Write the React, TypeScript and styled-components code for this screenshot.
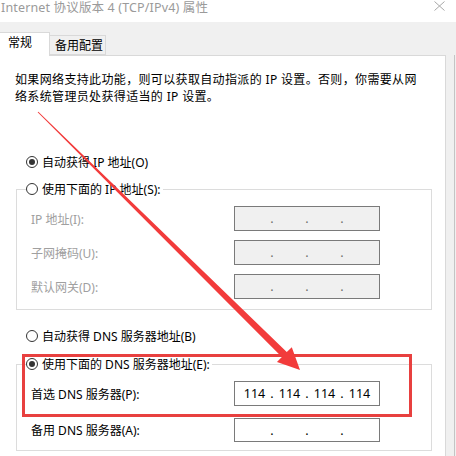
import React from "react"
import styled, { createGlobalStyle } from "styled-components"

const GlobalStyle = createGlobalStyle`
  html, body {
    margin: 0;
    padding: 0;
    background: #ffffff;
  }
  body {
    font-family: "Noto Sans", "Noto Sans CJK SC", sans-serif;
    font-size: 12px;
    color: #000;
  }
`

const Window = styled.div`
  position: relative;
  width: 456px;
  height: 456px;
  overflow: hidden;
  background: #ffffff;
  display: flex;
  flex-direction: column;
`

const TitleBar = styled.div`
  height: 22px;
  display: flex;
  align-items: flex-start;
  justify-content: space-between;
  background: #ffffff;
`

const TitleText = styled.div`
  color: #9a9a9a;
  font-size: 12.5px;
  line-height: 14px;
  letter-spacing: 0.15px;
  margin-top: 1px;
  padding-left: 1px;
  white-space: nowrap;
`

const CloseIcon = styled.svg`
  margin: 1px 11px 0 0;
`

const TabStrip = styled.div`
  height: 33px;
  background: #f0f0f0;
  display: flex;
  align-items: flex-end;
  position: relative;
  z-index: 1;
`

const Tab = styled.div<{ $active?: boolean }>`
  box-sizing: border-box;
  height: ${p => (p.$active ? "24px" : "20px")};
  margin-bottom: ${p => (p.$active ? "-1px" : "0")};
  width: ${p => (p.$active ? "51px" : "56px")};
  margin-left: ${p => (p.$active ? "-1px" : "0")};
  background: ${p => (p.$active ? "#ffffff" : "#f0f0f0")};
  border: 1px solid #d9d9d9;
  border-bottom: ${p => (p.$active ? "none" : "1px solid #d9d9d9")};
  border-left: ${p => (p.$active ? "1px solid #d9d9d9" : "none")};
  padding-left: ${p => (p.$active ? "8px" : "5px")};
  line-height: ${p => (p.$active ? "20px" : "19px")};
  font-size: 12px;
  white-space: nowrap;
`

const Body = styled.div`
  flex: 1;
  display: flex;
  background: #f0f0f0;
`

const Panel = styled.div`
  width: 446px;
  box-sizing: border-box;
  background: #ffffff;
  border-top: 1px solid #d9d9d9;
  border-right: 1px solid #d9d9d9;
  padding-left: 15px;
  display: flex;
  flex-direction: column;
`

const SideEdge = styled.div`
  flex: 1;
  border-right: 1px solid #c4c4c4;
  margin-right: 1px;
`

const Intro = styled.p`
  margin: 15px 0 0 0;
  line-height: 17px;
  letter-spacing: 0.35px;
  white-space: nowrap;
`

const RadioRow = styled.label<{ $top: number }>`
  display: flex;
  align-items: center;
  height: 20px;
  margin: ${p => p.$top}px 0 0 11px;
  white-space: nowrap;
`

const RadioCircle = styled.span<{ $checked?: boolean }>`
  box-sizing: border-box;
  width: 12px;
  height: 12px;
  border-radius: 50%;
  border: 1px solid #333333;
  background: #ffffff;
  margin-right: 4px;
  display: flex;
  align-items: center;
  justify-content: center;
  &::after {
    content: "";
    width: 6px;
    height: 6px;
    border-radius: 50%;
    background: ${p => (p.$checked ? "#333333" : "transparent")};
  }
`

const Group = styled.fieldset<{ $top: number; $gap: number; $bottom: number }>`
  margin: ${p => p.$top}px 0 0 1px;
  width: 416px;
  box-sizing: border-box;
  border: 1px solid #dcdcdc;
  padding: 7px 0 ${p => p.$bottom}px 14px;
  display: grid;
  grid-template-columns: 203px 146px;
  row-gap: ${p => p.$gap}px;
  align-items: center;
`

const Legend = styled.legend`
  padding: 0 2px 0 0;
  margin-left: -5px;
  height: 20px;
  display: flex;
  align-items: center;
  white-space: nowrap;
`

const FieldLabel = styled.span<{ $disabled?: boolean }>`
  color: ${p => (p.$disabled ? "#a0a0a0" : "#000000")};
  white-space: nowrap;
`

const IpBox = styled.div<{ $disabled?: boolean; $h?: number }>`
  box-sizing: border-box;
  height: ${p => p.$h || 25}px;
  border: 1px solid #7a7a7a;
  background: ${p => (p.$disabled ? "#f0f0f0" : "#ffffff")};
  display: flex;
  align-items: center;
  justify-content: center;
  color: ${p => (p.$disabled ? "#6d6d6d" : "#000000")};
  font-size: 12.5px;
`

const Octet = styled.span`
  width: 29px;
  text-align: center;
`

const Dot = styled.span`
  width: 6px;
  text-align: center;
`

const Highlight = styled.div`
  position: absolute;
  left: 22px;
  top: 354px;
  width: 390px;
  height: 63px;
  box-sizing: border-box;
  border: 3px solid #e8403f;
  pointer-events: none;
`

const Overlay = styled.svg`
  position: absolute;
  left: 0;
  top: 0;
  pointer-events: none;
`

function IpField({ value, disabled, h }: { value?: string[]; disabled?: boolean; h?: number }) {
  const parts = value || ["", "", "", ""]
  return (
    <IpBox $disabled={disabled} $h={h}>
      {parts.map((v, i) => (
        <React.Fragment key={i}>
          {i > 0 && <Dot>.</Dot>}
          <Octet>{v}</Octet>
        </React.Fragment>
      ))}
    </IpBox>
  )
}

export default function App() {
  return (
    <Window>
      <GlobalStyle />
      <TitleBar>
        <TitleText>Internet 协议版本 4 (TCP/IPv4) 属性</TitleText>
        <CloseIcon width="11" height="10" viewBox="0 0 11 10">
          <path d="M0.5 0.5 L10.5 9.5 M10.5 0.5 L0.5 9.5" stroke="#a8a8a8" strokeWidth="1" fill="none" />
        </CloseIcon>
      </TitleBar>
      <TabStrip>
        <Tab $active>常规</Tab>
        <Tab>备用配置</Tab>
      </TabStrip>
      <Body>
        <Panel>
          <Intro>
            如果网络支持此功能，则可以获取自动指派的 IP 设置。否则，你需要从网
            <br />
            络系统管理员处获得适当的 IP 设置。
          </Intro>
          <RadioRow $top={47}>
            <RadioCircle $checked />
            自动获得 IP 地址(O)
          </RadioRow>
          <Group $top={7} $gap={9} $bottom={10}>
            <Legend>
              <RadioCircle />
              使用下面的 IP 地址(S):
            </Legend>
            <FieldLabel $disabled>IP 地址(I):</FieldLabel>
            <IpField disabled />
            <FieldLabel $disabled>子网掩码(U):</FieldLabel>
            <IpField disabled />
            <FieldLabel $disabled>默认网关(D):</FieldLabel>
            <IpField disabled />
          </Group>
          <RadioRow $top={16}>
            <RadioCircle />
            自动获得 DNS 服务器地址(B)
          </RadioRow>
          <Group $top={8} $gap={12} $bottom={8}>
            <Legend>
              <RadioCircle $checked />
              使用下面的 DNS 服务器地址(E):
            </Legend>
            <FieldLabel>首选 DNS 服务器(P):</FieldLabel>
            <IpField value={["114", "114", "114", "114"]} />
            <FieldLabel>备用 DNS 服务器(A):</FieldLabel>
            <IpField h={24} />
          </Group>
        </Panel>
        <SideEdge />
      </Body>
      <Highlight />
      <Overlay width="456" height="456" viewBox="0 0 456 456">
        <polygon
          points="38.35,111.64 286.75,352.1 291.8,347.2 300,370 277.0,361.9 281.85,357.1 37.65,112.36"
          fill="#f23b3b"
        />
      </Overlay>
    </Window>
  )
}
